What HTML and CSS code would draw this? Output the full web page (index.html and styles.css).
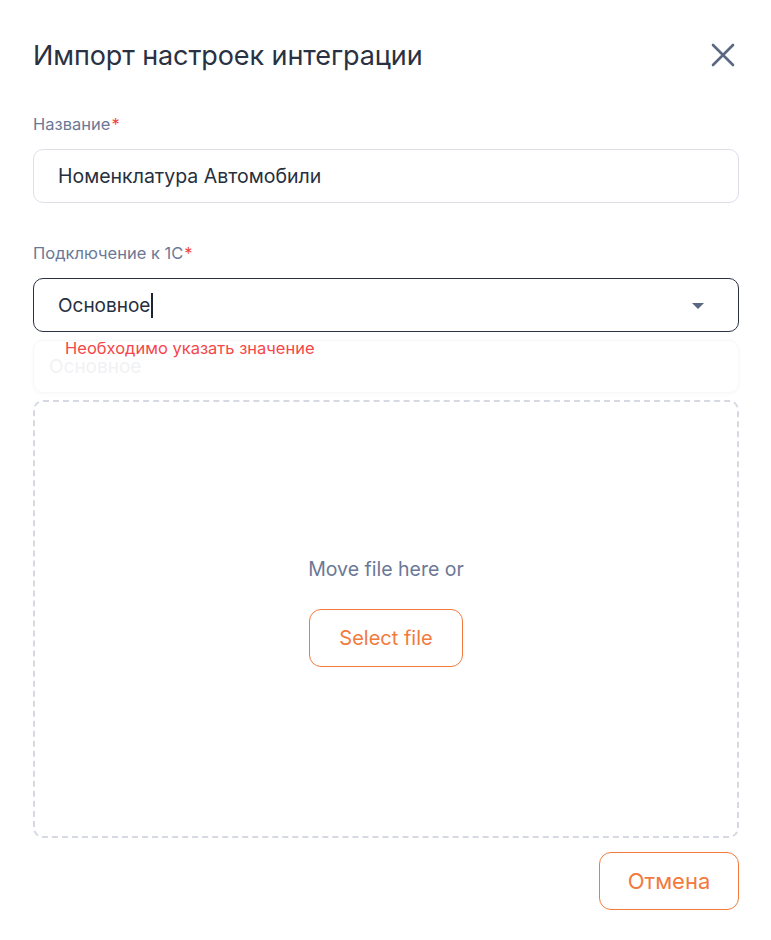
FILE: index.html
```html
<!DOCTYPE html>
<html lang="ru">
<head>
<meta charset="utf-8">
<link rel="stylesheet" href="styles.css">
</head>
<body>
<div class="modal">
  <div class="header">
    <h1 class="title">Импорт настроек интеграции</h1>
    <button class="close" aria-label="Закрыть">
      <svg width="24" height="24" viewBox="0 0 24 24"><path d="M2 2 L22 22 M22 2 L2 22" stroke="#5b6882" stroke-width="2.6" stroke-linecap="round" fill="none"/></svg>
    </button>
  </div>

  <div class="field">
    <label class="label">Название<span class="req">*</span></label>
    <div class="input">Номенклатура Автомобили</div>
  </div>

  <div class="field field-select">
    <label class="label">Подключение к 1С<span class="req">*</span></label>
    <div class="input select">
      <span class="value">Основное<span class="caret"></span></span>
      <svg class="arrow" width="12" height="7" viewBox="0 0 12 7"><path d="M0 0 H12 L6 6 Z" fill="#5b6882"/></svg>
    </div>
    <div class="error-row">
      <div class="ghost">Основное</div>
      <span class="error">Необходимо указать значение</span>
    </div>
  </div>

  <div class="dropzone">
    <div class="drop-text">Move file here or</div>
    <button class="btn btn-select">Select file</button>
  </div>

  <div class="footer">
    <button class="btn btn-cancel">Отмена</button>
  </div>
</div>
</body>
</html>
```

FILE: styles.css
```css
* { box-sizing: border-box; }
html, body { margin: 0; padding: 0; background: #ffffff; }
body {
  font-family: Inter, Roboto, "Noto Sans", sans-serif;
  color: #262f3d;
}
.modal {
  padding: 32px 32px 30px 33px;
  width: 771px;
}
.header {
  display: flex;
  align-items: center;
  justify-content: space-between;
  height: 46px;
}
.title {
  margin: 0;
  font-size: 27px;
  font-weight: 400;
  color: #2a3142;
  letter-spacing: -0.1px;
}
.close {
  border: 0;
  background: none;
  padding: 0;
  margin-right: 4px;
  width: 24px;
  height: 24px;
  display: flex;
}
.field { margin-top: 36px; }
.field + .field { margin-top: 40px; }
.label {
  display: block;
  font-size: 16.5px;
  line-height: 21px;
  color: #6b7896;
  margin-bottom: 14px;
}
.req { color: #f0483e; margin-left: 1px; }
.input {
  height: 54px;
  border: 1px solid #dcdfe6;
  border-radius: 10px;
  padding: 0 24px;
  display: flex;
  align-items: center;
  font-size: 19.5px;
  color: #262f3d;
}
.select {
  border-color: #2a3142;
  justify-content: space-between;
  padding-right: 34px;
  font-size: 19px;
}
.value { display: flex; align-items: center; }
.caret {
  display: inline-block;
  width: 2px;
  height: 25px;
  background: #1d2330;
  margin-left: 1px;
}
.arrow { margin-top: 2px; }
.error-row {
  position: relative;
  height: 68px;
  padding: 6px 0 0 32px;
}
.ghost {
  position: absolute;
  left: 0;
  right: 0;
  top: 8px;
  height: 53px;
  border-radius: 10px;
  box-shadow: 0 1px 4px rgba(40, 50, 80, 0.035);
  border: 1px solid #f7f8fa;
  padding: 14px 15px;
  font-size: 19px;
  color: #f1f2f4;
}
.error {
  position: relative;
  font-size: 16.5px;
  line-height: 20px;
  color: #f5474a;
}
.dropzone {
  height: 438px;
  border: 2px dashed #d6d9e1;
  border-radius: 10px;
  display: flex;
  flex-direction: column;
  align-items: center;
  justify-content: center;
  padding-bottom: 14px;
}
.drop-text {
  font-size: 19.5px;
  line-height: 24px;
  color: #6b7896;
  margin-bottom: 28px;
}
.btn {
  font-family: inherit;
  background: #fff;
  border: 1px solid #f27a3d;
  border-radius: 12px;
  color: #f27a3d;
  cursor: pointer;
}
.btn-select {
  width: 154px;
  height: 58px;
  font-size: 20px;
}
.footer {
  display: flex;
  justify-content: flex-end;
  margin-top: 14px;
}
.btn-cancel {
  width: 140px;
  height: 58px;
  font-size: 22px;
}
```
